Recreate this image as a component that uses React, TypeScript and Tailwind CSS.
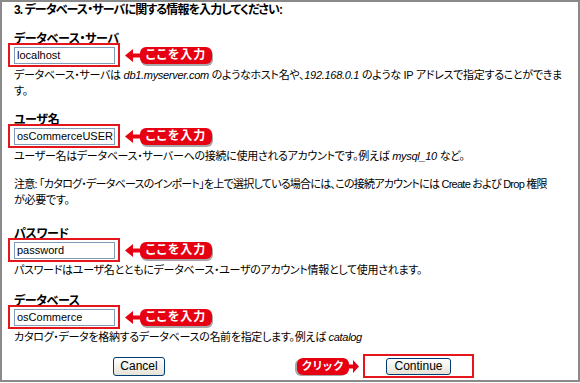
const font = { fontFamily: '"Liberation Sans", "Noto Sans CJK JP", sans-serif' }

function Pointer({ text }: { text: string }) {
  return (
    <div className="flex items-center ml-[5px]">
      <svg width="16" height="13" viewBox="0 0 16 13" className="-mr-[1px]">
        <polygon points="0,6.5 8,0 8,4.5 16,4.5 16,8.5 8,8.5 8,13" fill="#e60012" />
      </svg>
      <div className="h-[17px] w-[72px] rounded-[6px] bg-[#e60012] shadow-[1px_2px_0_#a8a8a8] flex items-center justify-center text-white text-[12px] font-bold tracking-[1px] leading-none">
        {text}
      </div>
    </div>
  )
}

function Field({ label, value, children }: { label: string; value: string; children: React.ReactNode }) {
  return (
    <div>
      <div className="font-bold text-[12px] leading-[16px] tracking-[-0.4px]">{label}</div>
      <div className="flex items-center -ml-[6px] -mt-[4px]">
        <div className="w-[112px] h-[24px] border-2 border-[#e4161c] flex items-center pl-[4px]">
          <div className="w-[101px] h-[17px] border border-[#7f9db9] px-[2px] text-[11px] leading-[15px] tracking-normal whitespace-nowrap overflow-hidden">{value}</div>
        </div>
        <Pointer text="ここを入力" />
      </div>
      <div className="text-[11px] leading-[16px]">{children}</div>
    </div>
  )
}

export default function App() {
  return (
    <div className="w-[580px] h-[383px] bg-white text-black [font-feature-settings:'palt'] tracking-[-0.3px]" style={font}>
      <div className="w-[580px] h-[382px] border-2 border-[#8a8a8a] pl-[12px]">
        <div className="font-bold text-[12px] leading-[16px] whitespace-nowrap tracking-[-0.9px]">3. データベース・サーバに関する情報を入力してください:</div>
        <div className="mt-[13px]">
          <Field label="データベース・サーバ" value="localhost">
            <div className="whitespace-nowrap">データベース・サーバは <i>db1.myserver.com</i> のようなホスト名や、<i>192.168.0.1</i> のような IP アドレスで指定することができま</div>
            <div>す。</div>
          </Field>
        </div>
        <div className="mt-[13px]">
          <Field label="ユーザ名" value="osCommerceUSER">
            <div className="whitespace-nowrap">ユーザー名はデータベース・サーバーへの接続に使用されるアカウントです。例えば <i>mysql_10</i> など。</div>
          </Field>
        </div>
        <div className="mt-[12px] text-[11px] leading-[16px]">
          <div className="whitespace-nowrap tracking-[-0.75px]">注意: 「カタログ・データベースのインポート」を上で選択している場合には、この接続アカウントには Create および Drop 権限</div>
          <div>が必要です。</div>
        </div>
        <div className="mt-[18px]">
          <Field label="パスワード" value="password">
            <div className="whitespace-nowrap">パスワードはユーザ名とともにデータベース・ユーザのアカウント情報として使用されます。</div>
          </Field>
        </div>
        <div className="mt-[15px]">
          <Field label="データベース" value="osCommerce">
            <div className="whitespace-nowrap">カタログ・データを格納するデータベースの名前を指定します。例えば <i>catalog</i></div>
          </Field>
        </div>
        <div className="flex items-center mt-[9px]">
          <button className="ml-[99px] w-[52px] h-[19px] rounded-[3px] border border-[#003c74] bg-gradient-to-b from-white to-[#e6e3d6] text-[12px] leading-none tracking-normal" style={font}>Cancel</button>
          <div className="flex items-center ml-[132px]">
            <div className="h-[17px] w-[52px] rounded-[6px] bg-[#e60012] shadow-[-2px_1px_0_#a8a8a8] flex items-center justify-center text-white text-[11px] font-bold tracking-[1px] leading-none">クリック</div>
            <svg width="11" height="13" viewBox="0 0 11 13" className="-ml-[1px]">
              <polygon points="0,4.5 5,4.5 5,0 11,6.5 5,13 5,8.5 0,8.5" fill="#e60012" />
            </svg>
          </div>
          <div className="ml-[4px] w-[111px] h-[24px] border-2 border-[#e4161c] flex items-center justify-center">
            <button className="w-[65px] h-[17px] rounded-[3px] border border-[#003c74] bg-gradient-to-b from-white to-[#e6e3d6] text-[12px] leading-none tracking-normal" style={font}>Continue</button>
          </div>
        </div>
      </div>
    </div>
  )
}
